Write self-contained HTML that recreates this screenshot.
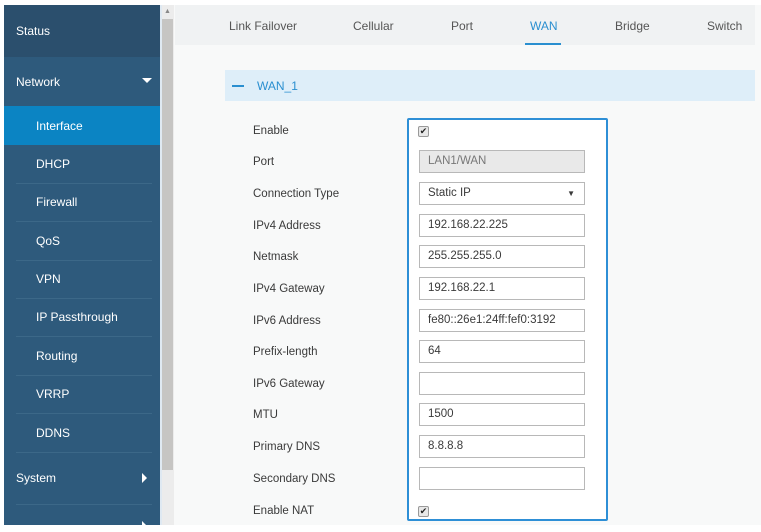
<!DOCTYPE html>
<html><head><meta charset="utf-8"><style>
*{margin:0;padding:0;box-sizing:border-box}
body{width:761px;height:532px;overflow:hidden;background:#fff;font-family:"Liberation Sans",sans-serif;position:relative}
.sb{position:absolute;left:4px;top:5px;width:156px;height:520px;background:#2e5a7c;overflow:hidden}
.it{position:absolute;left:0;width:156px;color:#fff;font-size:12px;display:flex;align-items:center}
.sub{padding-left:32px}
.top{padding-left:12px}
.sep{position:absolute;left:12px;right:8px;height:1px;background:#3c6888}
.scr{position:absolute;left:160px;top:5px;width:2px;height:520px;background:#dfe9f2}
.scb{position:absolute;left:162px;top:5px;width:12px;height:520px;background:#ececec}
.thumb{position:absolute;left:162px;top:19px;width:11px;height:451px;background:#c6c5c3}
.main{position:absolute;left:174px;top:5px;width:587px;height:520px;background:#f8f9f9}
.tabs{position:absolute;left:175px;top:5px;width:580px;height:40px;background:#f0f2f3}
.tab{position:absolute;top:19px;font-size:12px;color:#555}
.hdr{position:absolute;left:225px;top:70px;width:530px;height:31px;background:#deeef9;color:#2a8fd0;font-size:12px}
.lbl{position:absolute;left:253px;font-size:11.5px;color:#3a3a3a}
.box{position:absolute;left:407px;top:118px;width:201px;height:403px;border:2px solid #2e8fd6;border-radius:2px;background:#fff}
.in{position:absolute;left:419px;width:166px;height:23px;border:1px solid #b8b8b8;background:#fff;font-size:11.5px;color:#3a3a3a;padding-left:8px;line-height:21px}
.cb{position:absolute;left:418px;width:11px;height:11px;border:1px solid #999;background:#e8e8e8;border-radius:2px;font-size:9px;line-height:9px;text-align:center;color:#222}
</style></head><body>
<div class="sb">
<div class="it top" style="top:0;height:52px;background:#2b4f6d">Status</div>
<div class="it top" style="top:52px;height:49px">Network<span style="position:absolute;left:138px;top:21px;width:0;height:0;border-left:5px solid transparent;border-right:5px solid transparent;border-top:5px solid #fff"></span></div>
<div class="it sub" style="top:101px;height:39px;background:#0b84c3">Interface</div>
<div class="it sub" style="top:140px;height:38px">DHCP</div>
<div class="sep" style="top:178px"></div>
<div class="it sub" style="top:178px;height:38px">Firewall</div>
<div class="sep" style="top:216px"></div>
<div class="it sub" style="top:216px;height:39px">QoS</div>
<div class="sep" style="top:255px"></div>
<div class="it sub" style="top:255px;height:38px">VPN</div>
<div class="sep" style="top:293px"></div>
<div class="it sub" style="top:293px;height:38px">IP Passthrough</div>
<div class="sep" style="top:331px"></div>
<div class="it sub" style="top:331px;height:39px">Routing</div>
<div class="sep" style="top:370px"></div>
<div class="it sub" style="top:370px;height:38px">VRRP</div>
<div class="sep" style="top:408px"></div>
<div class="it sub" style="top:408px;height:39px">DDNS</div>
<div class="sep" style="top:447px"></div>
<div class="it top" style="top:447px;height:52px">System<span style="position:absolute;left:138px;top:21px;width:0;height:0;border-top:5px solid transparent;border-bottom:5px solid transparent;border-left:5px solid #fff"></span></div>
<div class="sep" style="top:499px"></div>
<span style="position:absolute;left:138px;top:516px;width:0;height:0;border-top:5px solid transparent;border-bottom:5px solid transparent;border-left:5px solid #fff"></span>
</div>
<div class="scr"></div><div class="scb"></div><div class="thumb"></div>
<div style="position:absolute;left:164px;top:8px;font-size:7px;color:#888">▲</div>
<div class="main"></div>
<div class="tabs"></div>
<div class="tab" style="left:229px">Link Failover</div>
<div class="tab" style="left:353px">Cellular</div>
<div class="tab" style="left:451px">Port</div>
<div class="tab" style="left:530px;color:#2a8fd0">WAN</div>
<div style="position:absolute;left:525px;top:43px;width:36px;height:2px;background:#2a8fd0"></div>
<div class="tab" style="left:615px">Bridge</div>
<div class="tab" style="left:707px">Switch</div>
<div class="hdr"><span style="position:absolute;left:7px;top:15px;width:12px;height:2px;background:#2a8fd0"></span><span style="position:absolute;left:32px;top:9px">WAN_1</span></div>
<div class="box"></div>
<div class="lbl" style="top:125px">Enable</div>
<div class="lbl" style="top:156px">Port</div>
<div class="lbl" style="top:188px">Connection Type</div>
<div class="lbl" style="top:220px">IPv4 Address</div>
<div class="lbl" style="top:251px">Netmask</div>
<div class="lbl" style="top:283px">IPv4 Gateway</div>
<div class="lbl" style="top:315px">IPv6 Address</div>
<div class="lbl" style="top:346px">Prefix-length</div>
<div class="lbl" style="top:378px">IPv6 Gateway</div>
<div class="lbl" style="top:409px">MTU</div>
<div class="lbl" style="top:441px">Primary DNS</div>
<div class="lbl" style="top:473px">Secondary DNS</div>
<div class="lbl" style="top:505px">Enable NAT</div>
<div class="cb" style="top:126px">✔</div>
<div class="in" style="top:150px;background:#e9e9e9;color:#777">LAN1/WAN</div>
<div class="in" style="top:182px">Static IP<span style="position:absolute;right:9px;top:0;font-size:8px">▼</span></div>
<div class="in" style="top:214px">192.168.22.225</div>
<div class="in" style="top:245px">255.255.255.0</div>
<div class="in" style="top:277px">192.168.22.1</div>
<div class="in" style="top:309px">fe80::26e1:24ff:fef0:3192</div>
<div class="in" style="top:340px">64</div>
<div class="in" style="top:372px"></div>
<div class="in" style="top:403px">1500</div>
<div class="in" style="top:435px">8.8.8.8</div>
<div class="in" style="top:467px"></div>
<div class="cb" style="top:506px">✔</div>
</body></html>
